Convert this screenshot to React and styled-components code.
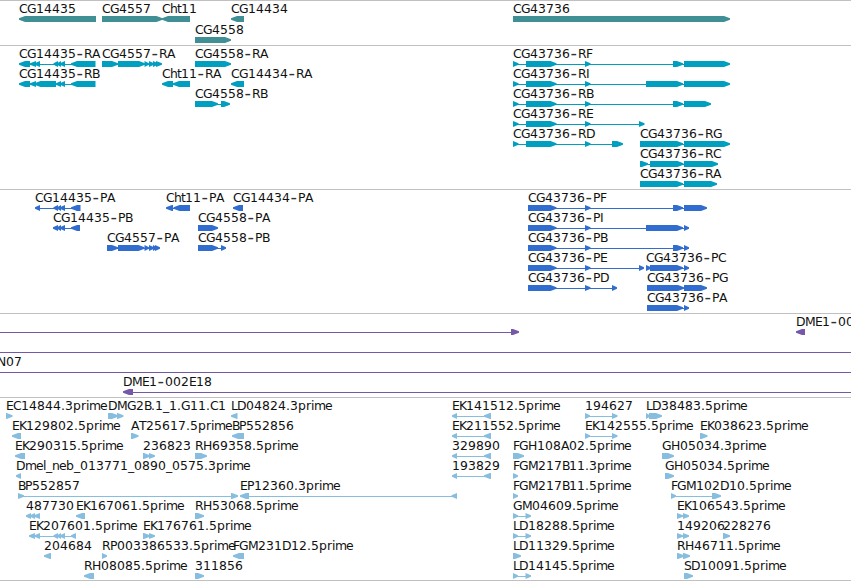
import React from 'react';
import styled, { createGlobalStyle } from 'styled-components';

const GlobalStyle = createGlobalStyle`
  body {
    margin: 0;
    background-color: #fff;
    overflow: hidden;
  }
`;

const Browser = styled.main`
  display: flex;
  flex-flow: column nowrap;
  width: 851px;
  height: 581px;
  overflow: hidden;
`;

const TrackBox = styled.section`
  display: flex;
  flex-flow: column nowrap;
  flex: none;
  border-top: 1px solid #c0c0c0;
  padding-bottom: ${({ $gap }) => $gap}px;
  color: ${({ $color }) => $color};
  &:last-child {
    border-bottom: 1px solid #c0c0c0;
  }
`;

const Lane = styled.svg`
  display: block;
  width: 851px;
  height: ${({ $height }) => $height}px;
  overflow: visible;
`;

const Name = styled.text`
  font-family: 'DejaVu Sans', sans-serif;
  font-size: 12.4px;
  fill: #111;
`;

const Dash = styled.tspan`
  font-size: 18px;
  fill: #333;
`;

// advance of every glyph in whole pixels, digits are all 8
const ADVANCE = {
  A: 8, B: 7, C: 8, D: 9, E: 7, F: 6, G: 9, H: 9, I: 4, K: 7, L: 6, M: 10,
  N: 9, P: 7, R: 8, S: 7, T: 7, b: 8, e: 7, h: 7, i: 3, l: 3, m: 11, n: 7,
  p: 8, r: 5, t: 4, '.': 4, '-': 8, _: 6,
};

// splits a label at its dashes and gives every glyph its own x
const labelParts = (label, start) => {
  let x = start;
  return label
    .split(/(-)/)
    .filter(Boolean)
    .map((text) => {
      const positions = text.split('').map((char) => {
        const at = char === '-' ? x + 0.5 : x;
        x += ADVANCE[char] || 8;
        return at;
      });
      return { text, positions: positions.join(' ') };
    });
};

const blockPoints = ([start, end], strand) => {
  const head = Math.min(6, end - start);
  if (strand === '+') {
    return `${start},15 ${end - head},15 ${end},17.2 ${end},18.8 ${end - head},21 ${start},21`;
  }
  return `${end},15 ${start + head},15 ${start},17.2 ${start},18.8 ${start + head},21 ${end},21`;
};

// blocks shared by several features
const RX = [[513, 518.5], [526, 556.5], [585, 590.5]];
const PX = [[528, 556.5], [585, 590.5]];
const EK = [[452, 457], [484, 491]];
const LD = [[513, 518], [525.5, 531]];
const SMALL = [[53.5, 58], [57, 61], [60, 65]];

// feature: [label, strand, blocks, line]
const tracks = [
  {
    id: 'gene',
    color: '#408f94',
    height: 21,
    gap: 2,
    lanes: [
      [
        ['CG14435', '-', [[19, 96]]],
        ['CG4557', '+', [[102, 162.5]]],
        ['Cht11', '-', [[162, 190]]],
        ['CG14434', '-', [[231, 244]]],
        ['CG43736', '+', [[513, 730]]],
      ],
      [['CG4558', '+', [[195, 231]]]],
    ],
  },
  {
    id: 'mrna',
    color: '#009fc0',
    height: 20,
    gap: 3,
    lanes: [
      [
        ['CG14435-RA', '-', [[19, 30], [30, 36], [34.5, 40], ...SMALL, [71, 95.5]]],
        ['CG4557-RA', '+', [[102, 118], [118, 145], [144.5, 149], [149, 154], [153, 158], [156, 162]]],
        ['CG4558-RA', '+', [[195, 231]]],
        ['CG43736-RF', '+', [...RX, [673, 683], [684, 730]]],
      ],
      [
        ['CG14435-RB', '-', [[19, 30], [30, 36], [34.5, 56], [56, 61], [60, 65], [71, 95.5]]],
        ['Cht11-RA', '-', [[162, 173], [173, 190]]],
        ['CG14434-RA', '-', [[231, 244]]],
        ['CG43736-RI', '+', [...RX, [646, 683], [684, 730]]],
      ],
      [
        ['CG4558-RB', '+', [[195, 218], [221, 230]]],
        ['CG43736-RB', '+', [...RX, [673, 683], [684, 711]]],
      ],
      [['CG43736-RE', '+', [...RX, [639, 644.5]]]],
      [
        ['CG43736-RD', '+', [...RX, [612, 623]]],
        ['CG43736-RG', '+', [[640, 683], [684, 730]]],
      ],
      [['CG43736-RC', '+', [[640, 648], [650, 683.5], [684, 718]]]],
      [['CG43736-RA', '+', [[640, 683], [684, 717]]]],
    ],
  },
  {
    id: 'protein',
    color: '#306dce',
    height: 20,
    gap: 3,
    lanes: [
      [
        ['CG14435-PA', '-', [[35, 40], ...SMALL, [71, 80.5]]],
        ['Cht11-PA', '-', [[166, 173], [173.5, 190]]],
        ['CG14434-PA', '-', [[233, 243]]],
        ['CG43736-PF', '+', [...PX, [673, 683], [684, 707]]],
      ],
      [
        ['CG14435-PB', '-', [[53, 58], [57, 61], [60, 65], [71, 80]]],
        ['CG4558-PA', '+', [[198, 218]]],
        ['CG43736-PI', '+', [...PX, [646, 683], [684, 689]]],
      ],
      [
        ['CG4557-PA', '+', [[107, 118], [118, 144.5], [144.5, 149], [149, 154], [153, 157], [155, 160]]],
        ['CG4558-PB', '+', [[198, 218], [221, 226]]],
        ['CG43736-PB', '+', [...PX, [673, 683], [684, 689]]],
      ],
      [
        ['CG43736-PE', '+', [...PX, [639, 644]]],
        ['CG43736-PC', '+', [[646, 651], [650, 683], [684, 689]]],
      ],
      [
        ['CG43736-PD', '+', [...PX, [612, 617]]],
        ['CG43736-PG', '+', [[647, 684], [684, 707]]],
      ],
      [['CG43736-PA', '+', [[647, 683], [684, 689]]]],
    ],
  },
  {
    id: 'clone',
    color: '#7558a7',
    height: 20,
    gap: 3,
    lanes: [
      [
        ['', '+', [[511, 519]], [-2, 519]],
        ['DME1-00', '-', [[796, 805]]],
      ],
      [['', '+', [], [-2, 853]]],
      [['N07', '+', [], [-3, 853]]],
      [['DME1-002E18', '-', [[123, 133]], [123, 853]]],
    ],
  },
  {
    id: 'est',
    color: '#87bddf',
    height: 20,
    gap: 2,
    lanes: [
      [
        ['EC14844.3prime', '+', [[6, 12.5]]],
        ['DMG2B.1_1.G11.C1', '+', [[108, 118], [117, 123.5]]],
        ['LD04824.3prime', '-', [[231, 237.5]]],
        ['EK141512.5prime', '-', EK],
        ['194627', '+', [[585, 590], [612, 617.5]]],
        ['LD38483.5prime', '+', [[646, 650], [649, 662]]],
      ],
      [
        ['EK129802.5prime', '-', [[12, 21]]],
        ['AT25617.5prime', '+', [[131, 138.5]]],
        ['BP552856', '-', [[232, 244]]],
        ['EK211552.5prime', '-', EK],
        ['EK142555.5prime', '+', [[585, 590], [612, 617.5]]],
        ['EK038623.5prime', '+', [[700, 707.5]]],
      ],
      [
        ['EK290315.5prime', '-', [[15, 25]]],
        ['236823', '+', [[143, 150], [149, 155]]],
        ['RH69358.5prime', '+', [[195, 207]]],
        ['329890', '-', EK],
        ['FGH108A02.5prime', '+', [[513, 524]]],
        ['GH05034.3prime', '+', [[662, 674]]],
      ],
      [
        ['Dmel_neb_013771_0890_0575.3prime', '-', [[16, 21]]],
        ['193829', '-', EK],
        ['FGM217B11.3prime', '+', [[513, 518]]],
        ['GH05034.5prime', '+', [[665, 674]]],
      ],
      [
        ['BP552857', '+', [[18, 24], [231, 238]]],
        ['EP12360.3prime', '-', [[240, 249], [451.5, 457]]],
        ['FGM217B11.5prime', '+', [[513, 518]]],
        ['FGM102D10.5prime', '+', [[671, 676], [712, 721]]],
      ],
      [
        ['487730', '-', [[26, 31], [30, 35], [34, 40]]],
        ['EK167061.5prime', '-', [[76, 85]]],
        ['RH53068.5prime', '+', [[195, 204]]],
        ['GM04609.5prime', '+', LD],
        ['EK106543.5prime', '+', [[677, 683], [683, 689]]],
      ],
      [
        ['EK207601.5prime', '-', [[29, 35], [34.5, 40], ...SMALL, [71, 76]]],
        ['EK176761.5prime', '+', [[143, 150], [149, 155]]],
        ['LD18288.5prime', '+', LD],
        ['149206', '+', [[677, 683], [683, 689]]],
        ['228276', '+', [[723, 730]]],
      ],
      [
        ['204684', '-', [[44, 51]]],
        ['RP003386533.5prime', '+', [[102, 107]]],
        ['FGM231D12.5prime', '-', [[233, 244]]],
        ['LD11329.5prime', '+', [[513, 521]]],
        ['RH46711.5prime', '+', [[677, 684], [683, 690]]],
      ],
      [
        ['RH08085.5prime', '-', [[84, 94]]],
        ['311856', '+', [[195, 204]]],
        ['LD14145.5prime', '+', LD],
        ['SD10091.5prime', '+', [[684, 693]]],
      ],
    ],
  },
];

const Label = ({ label, start }) => (
  <Name y="12">
    {labelParts(label, start).map(({ text, positions }) =>
      text === '-' ? (
        <Dash key={positions} x={positions} y="13.4">{text}</Dash>
      ) : (
        <tspan key={positions} x={positions} y="12">{text}</tspan>
      )
    )}
  </Name>
);

const Feature = ({ feature }) => {
  const [label, strand, blocks, line] = feature;
  const [start, end] = line || [blocks[0][0], blocks[blocks.length - 1][1]];
  const hasLine = line || blocks.length > 1;
  return (
    <g>
      {label && <Label label={label} start={start} />}
      {hasLine && (
        <rect x={start + 1} y="18" width={end - start - 2} height="1" fill="currentColor" />
      )}
      {blocks.map((block) => (
        <polygon key={block[0]} points={blockPoints(block, strand)} fill="currentColor" />
      ))}
    </g>
  );
};

const Track = ({ track }) => (
  <TrackBox $color={track.color} $gap={track.gap}>
    {track.lanes.map((lane, index) => (
      <Lane key={index} $height={track.height}>
        {lane.map((feature, i) => (
          <Feature key={i} feature={feature} />
        ))}
      </Lane>
    ))}
  </TrackBox>
);

const App = () => (
  <>
    <GlobalStyle />
    <Browser>
      {tracks.map((track) => (
        <Track key={track.id} track={track} />
      ))}
    </Browser>
  </>
);

export default App;
